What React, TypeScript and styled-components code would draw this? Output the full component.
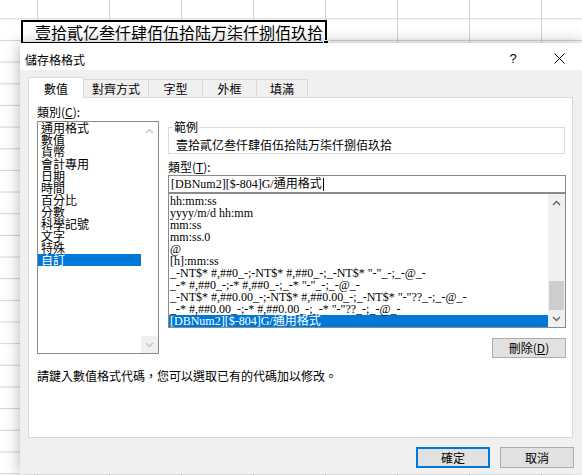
import React from "react";
import styled, { createGlobalStyle } from "styled-components";

const Global = createGlobalStyle`
  html, body { margin: 0; padding: 0; width: 582px; height: 475px; overflow: hidden; background: #fff; }
  body { font-family: "Noto Sans CJK TC", "Noto Sans", sans-serif; font-size: 12px; color: #000; }
  * { box-sizing: border-box; }
`;

const CJK = `"Noto Sans CJK TC", "Noto Sans", sans-serif`;
const CODE = `"Liberation Serif", "Noto Sans CJK TC", serif`;

const Sheet = styled.div`
  position: relative;
  width: 582px;
  height: 475px;
  overflow: hidden;
  background-color: #fff;
  background-image:
    linear-gradient(to right, #d4d4d4 1px, transparent 1px),
    linear-gradient(to bottom, #d4d4d4 1px, transparent 1px);
  background-size: 72px 21.67px;
  background-position: 37px 18.3px;
`;

const ActiveCell = styled.div`
  position: absolute;
  left: 21px;
  top: 20px;
  width: 306px;
  height: 24px;
  border: 2px solid #000;
  background: #fff;
  font-family: ${CJK};
  font-size: 16px;
  line-height: 20px;
  padding-left: 12px;
  white-space: nowrap;
`;

const FillHandle = styled.div`
  position: absolute;
  right: -4px;
  bottom: -4px;
  width: 6px;
  height: 6px;
  background: #000;
  border: 1px solid #fff;
`;

const Dialog = styled.div`
  position: absolute;
  left: 20px;
  top: 43px;
  width: 562px;
  height: 431px;
  background: #f0f0f0;
  box-shadow: 0 0 14px rgba(0, 0, 0, 0.3);
  display: flex;
  flex-direction: column;
`;

const TitleBar = styled.div`
  height: 27px;
  flex: none;
  background: #fff;
  display: flex;
  align-items: flex-start;
`;

const Title = styled.div`
  flex: 1;
  padding: 10px 0 0 5px;
  line-height: 14px;
`;

const CaptionButton = styled.div`
  width: 46px;
  height: 27px;
  display: flex;
  align-items: center;
  justify-content: center;
  padding-top: 3px;
  font-family: "Liberation Sans", sans-serif;
  font-size: 13px;
`;

const Body = styled.div`
  flex: 1;
  padding: 7px 8px 0 8px;
  display: flex;
  flex-direction: column;
`;

const TabStrip = styled.div`
  display: flex;
  align-items: flex-end;
  height: 20px;
  position: relative;
  z-index: 2;
`;

const Tab = styled.div<{ $active?: boolean; $w: number }>`
  width: ${(p) => p.$w}px;
  height: ${(p) => (p.$active ? 21 : 18)}px;
  margin-bottom: ${(p) => (p.$active ? -1 : 0)}px;
  margin-left: -1px;
  &:first-child { margin-left: 0; }
  background: ${(p) => (p.$active ? "#fff" : "#f0f0f0")};
  border: 1px solid #d9d9d9;
  border-bottom: none;
  text-align: center;
  line-height: 14px;
  padding-top: ${(p) => (p.$active ? 4 : 2)}px;
  position: relative;
  z-index: ${(p) => (p.$active ? 2 : 1)};
`;

const Pane = styled.div`
  width: 545px;
  height: 341px;
  background: #fff;
  border: 1px solid #d9d9d9;
  padding: 7px 6px 0 8px;
  display: flex;
  flex-direction: column;
`;

const TopRow = styled.div`
  display: flex;
  gap: 9px;
  align-items: flex-start;
`;

const LeftCol = styled.div`
  width: 122px;
  display: flex;
  flex-direction: column;
`;

const RightCol = styled.div`
  width: 398px;
  display: flex;
  flex-direction: column;
`;

const Label = styled.div<{ $mt?: number }>`
  line-height: 14px;
  height: 14px;
  margin-top: ${(p) => p.$mt ?? 0}px;
  u { text-underline-offset: 1px; }
`;

const ListBox = styled.div<{ $h: number; $mt?: number }>`
  height: ${(p) => p.$h}px;
  margin-top: ${(p) => p.$mt ?? 0}px;
  border: 1px solid #8a8a8a;
  display: flex;
  background: #fff;
`;

const Items = styled.div<{ $pt?: number }>`
  flex: 1;
  min-width: 0;
  overflow: hidden;
  padding-top: ${(p) => p.$pt ?? 0}px;
`;

const Item = styled.div<{ $sel?: boolean; $code?: boolean }>`
  height: 12px;
  line-height: 12px;
  padding-left: ${(p) => (p.$code ? 1 : 3)}px;
  white-space: nowrap;
  font-family: ${(p) => (p.$code ? CODE : CJK)};
  font-size: 12px;
  background: ${(p) => (p.$sel ? "#0078d7" : "transparent")};
  color: ${(p) => (p.$sel ? "#fff" : "#000")};
`;

const ScrollBar = styled.div<{ $disabled?: boolean }>`
  width: 17px;
  flex: none;
  display: flex;
  flex-direction: column;
  background: ${(p) => (p.$disabled ? "#fff" : "#f0f0f0")};
`;

const ArrowButton = styled.div<{ $shade?: boolean }>`
  height: 17px;
  flex: none;
  display: flex;
  align-items: center;
  justify-content: center;
  background: ${(p) => (p.$shade ? "#f0f0f0" : "transparent")};
`;

const Track = styled.div`
  flex: 1;
  display: flex;
  flex-direction: column;
  justify-content: flex-end;
`;

const Thumb = styled.div`
  height: 29px;
  margin: 0 1px;
  background: #cdcdcd;
`;

const GroupBox = styled.div`
  margin-top: 22px;
  width: 397px;
  border: 1px solid #dcdcdc;
  padding: 0 8px 2px 7px;
`;

const Legend = styled.div`
  width: fit-content;
  margin: -7px 0 0 -3px;
  padding: 0 1px;
  background: #fff;
  line-height: 12px;
`;

const Sample = styled.div`
  margin-top: 6px;
  line-height: 12px;
`;

const TextInput = styled.div`
  margin-top: 1px;
  height: 18px;
  border: 1px solid #8a8a8a;
  padding-left: 2px;
  line-height: 16px;
  font-family: ${CODE};
  white-space: nowrap;
  display: flex;
  align-items: center;
`;

const Caret = styled.span`
  display: inline-block;
  width: 1px;
  height: 13px;
  background: #000;
  margin-left: 1px;
`;

const ButtonRow = styled.div<{ $mt: number; $gap?: number }>`
  display: flex;
  justify-content: flex-end;
  gap: ${(p) => p.$gap ?? 0}px;
  margin-top: ${(p) => p.$mt}px;
`;

const Button = styled.div<{ $default?: boolean; $h?: number }>`
  width: 74px;
  height: ${(p) => p.$h ?? 21}px;
  background: #e1e1e1;
  border: ${(p) => (p.$default ? "2px solid #0078d7" : "1px solid #adadad")};
  display: flex;
  align-items: center;
  justify-content: center;
  line-height: 14px;
  u { text-underline-offset: 1px; }
`;

const HelpText = styled.div`
  margin-top: 11px;
  line-height: 14px;
`;

const Chevron = ({ up, color }: { up?: boolean; color: string }) => (
  <svg width="9" height="6" viewBox="0 0 9 6">
    <path
      d={up ? "M1 5 L4.5 1.5 L8 5" : "M1 1 L4.5 4.5 L8 1"}
      fill="none"
      stroke={color}
      strokeWidth="1.3"
    />
  </svg>
);

const CloseGlyph = () => (
  <svg width="11" height="11" viewBox="0 0 11 11">
    <path d="M0.5 0.5 L10.5 10.5 M10.5 0.5 L0.5 10.5" stroke="#000" strokeWidth="1" fill="none" />
  </svg>
);

const categories = [
  "通用格式",
  "數值",
  "貨幣",
  "會計專用",
  "日期",
  "時間",
  "百分比",
  "分數",
  "科學記號",
  "文字",
  "特殊",
  "自訂",
];

const formats = [
  "hh:mm:ss",
  "yyyy/m/d hh:mm",
  "mm:ss",
  "mm:ss.0",
  "@",
  "[h]:mm:ss",
  '_-NT$* #,##0_-;-NT$* #,##0_-;_-NT$* "-"_-;_-@_-',
  '_-* #,##0_-;-* #,##0_-;_-* "-"_-;_-@_-',
  '_-NT$* #,##0.00_-;-NT$* #,##0.00_-;_-NT$* "-"??_-;_-@_-',
  '_-* #,##0.00_-;-* #,##0.00_-;_-* "-"??_-;_-@_-',
  "[DBNum2][$-804]G/通用格式",
];

const tabs = [
  { label: "數值", w: 56 },
  { label: "對齊方式", w: 66 },
  { label: "字型", w: 55 },
  { label: "外框", w: 55 },
  { label: "填滿", w: 52 },
];

const SAMPLE = "壹拾貳亿叁仟肆佰伍拾陆万柒仟捌佰玖拾";

export default function App() {
  return (
    <>
      <Global />
      <Sheet>
        <ActiveCell>
          {SAMPLE}
          <FillHandle />
        </ActiveCell>
        <Dialog>
          <TitleBar>
            <Title>儲存格格式</Title>
            <CaptionButton>?</CaptionButton>
            <CaptionButton>
              <CloseGlyph />
            </CaptionButton>
          </TitleBar>
          <Body>
            <TabStrip>
              {tabs.map((t, i) => (
                <Tab key={t.label} $w={t.w} $active={i === 0}>
                  {t.label}
                </Tab>
              ))}
            </TabStrip>
            <Pane>
              <TopRow>
                <LeftCol>
                  <Label>
                    類別(<u>C</u>):
                  </Label>
                  <ListBox $h={233} $mt={2}>
                    <Items>
                      {categories.map((c, i) => (
                        <Item key={c} $sel={i === categories.length - 1}>
                          {c}
                        </Item>
                      ))}
                    </Items>
                    <ScrollBar $disabled>
                      <ArrowButton>
                        <Chevron up color="#c4c4c4" />
                      </ArrowButton>
                      <Track />
                      <ArrowButton $shade>
                        <Chevron color="#c4c4c4" />
                      </ArrowButton>
                    </ScrollBar>
                  </ListBox>
                </LeftCol>
                <RightCol>
                  <GroupBox>
                    <Legend>範例</Legend>
                    <Sample>{SAMPLE}</Sample>
                  </GroupBox>
                  <Label $mt={6}>
                    類型(<u>T</u>):
                  </Label>
                  <TextInput>
                    [DBNum2][$-804]G/通用格式
                    <Caret />
                  </TextInput>
                  <ListBox $h={135}>
                    <Items $pt={1}>
                      {formats.map((f, i) => (
                        <Item key={f} $code $sel={i === formats.length - 1}>
                          {f}
                        </Item>
                      ))}
                    </Items>
                    <ScrollBar>
                      <ArrowButton>
                        <Chevron up color="#606060" />
                      </ArrowButton>
                      <Track>
                        <Thumb />
                      </Track>
                      <ArrowButton>
                        <Chevron color="#606060" />
                      </ArrowButton>
                    </ScrollBar>
                  </ListBox>
                  <ButtonRow $mt={10}>
                    <Button $h={20}>
                      刪除(<u>D</u>)
                    </Button>
                  </ButtonRow>
                </RightCol>
              </TopRow>
              <HelpText>請鍵入數值格式代碼，您可以選取已有的代碼加以修改。</HelpText>
            </Pane>
            <ButtonRow $mt={9} $gap={10}>
              <Button $default>確定</Button>
              <Button>取消</Button>
            </ButtonRow>
          </Body>
        </Dialog>
      </Sheet>
    </>
  );
}
